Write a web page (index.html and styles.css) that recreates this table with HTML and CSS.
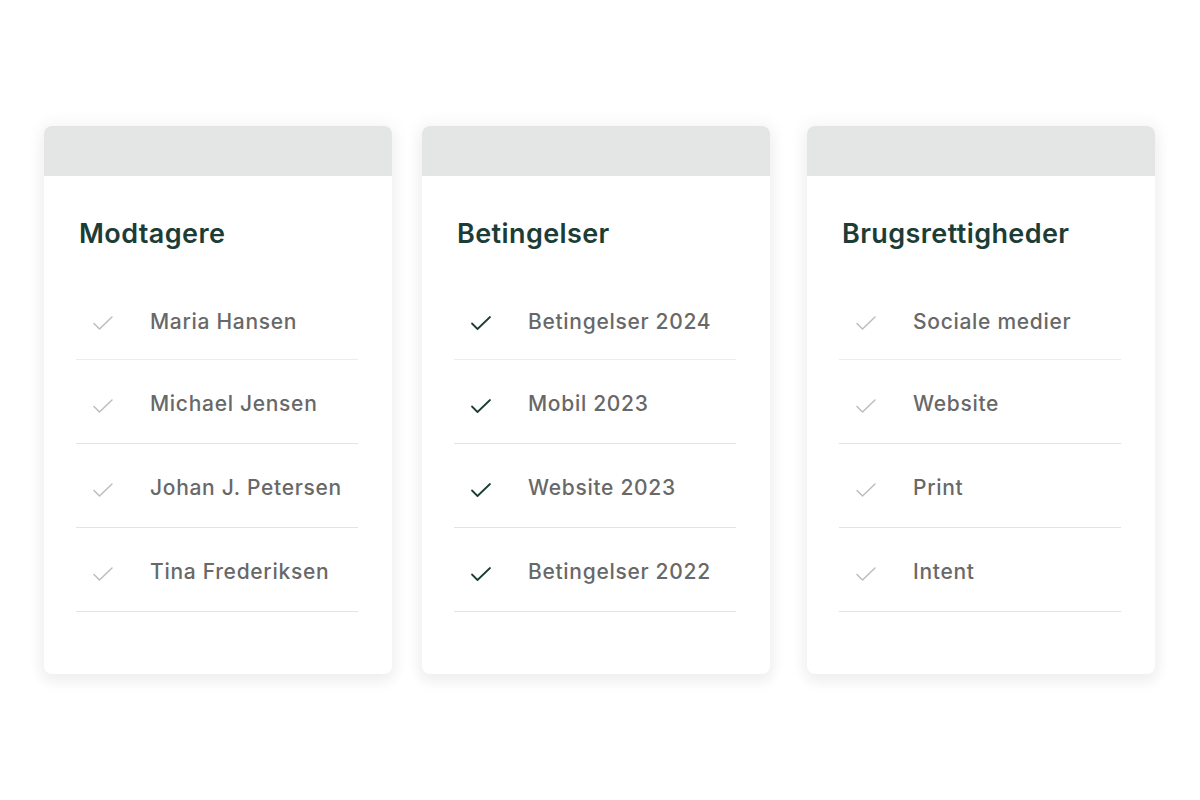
FILE: index.html
```html
<!DOCTYPE html>
<html lang="da">
<head>
<meta charset="utf-8">
<link rel="stylesheet" href="styles.css">
<title>Kort</title>
</head>
<body>
<div class="board">
  <section class="card">
    <div class="card-head"></div>
    <h2 class="card-title">Modtagere</h2>
    <ul class="list">
      <li class="row first"><svg class="check muted" viewBox="0 0 20 14"><path d="M1 7.5 L6.5 13 L19 1"/></svg><span>Maria Hansen</span></li>
      <li class="row"><svg class="check muted" viewBox="0 0 20 14"><path d="M1 7.5 L6.5 13 L19 1"/></svg><span>Michael Jensen</span></li>
      <li class="row"><svg class="check muted" viewBox="0 0 20 14"><path d="M1 7.5 L6.5 13 L19 1"/></svg><span>Johan J. Petersen</span></li>
      <li class="row"><svg class="check muted" viewBox="0 0 20 14"><path d="M1 7.5 L6.5 13 L19 1"/></svg><span>Tina Frederiksen</span></li>
    </ul>
  </section>
  <section class="card">
    <div class="card-head"></div>
    <h2 class="card-title">Betingelser</h2>
    <ul class="list">
      <li class="row first"><svg class="check on" viewBox="0 0 20 14"><path d="M1 7.5 L6.5 13 L19 1"/></svg><span>Betingelser 2024</span></li>
      <li class="row"><svg class="check on" viewBox="0 0 20 14"><path d="M1 7.5 L6.5 13 L19 1"/></svg><span>Mobil 2023</span></li>
      <li class="row"><svg class="check on" viewBox="0 0 20 14"><path d="M1 7.5 L6.5 13 L19 1"/></svg><span>Website 2023</span></li>
      <li class="row"><svg class="check on" viewBox="0 0 20 14"><path d="M1 7.5 L6.5 13 L19 1"/></svg><span>Betingelser 2022</span></li>
    </ul>
  </section>
  <section class="card card-wide-gap">
    <div class="card-head"></div>
    <h2 class="card-title">Brugsrettigheder</h2>
    <ul class="list">
      <li class="row first"><svg class="check muted" viewBox="0 0 20 14"><path d="M1 7.5 L6.5 13 L19 1"/></svg><span>Sociale medier</span></li>
      <li class="row"><svg class="check muted" viewBox="0 0 20 14"><path d="M1 7.5 L6.5 13 L19 1"/></svg><span>Website</span></li>
      <li class="row"><svg class="check muted" viewBox="0 0 20 14"><path d="M1 7.5 L6.5 13 L19 1"/></svg><span>Print</span></li>
      <li class="row"><svg class="check muted" viewBox="0 0 20 14"><path d="M1 7.5 L6.5 13 L19 1"/></svg><span>Intent</span></li>
    </ul>
  </section>
</div>
</body>
</html>
```

FILE: styles.css
```css
* { box-sizing: border-box; }

html, body {
  margin: 0;
  padding: 0;
  background: #ffffff;
  font-family: Inter, "Open Sans", "Liberation Sans", sans-serif;
}

body { min-height: 800px; }

.board {
  display: flex;
  gap: 30px;
  padding: 126px 0 60px 44px;
}

.card {
  width: 348px;
  height: 548px;
  background: #ffffff;
  border-radius: 8px;
  overflow: hidden;
  box-shadow: 0 0 14px 6px rgba(0, 0, 0, 0.03), 0 8px 14px 2px rgba(0, 0, 0, 0.04);
  display: flex;
  flex-direction: column;
}

.card-wide-gap { margin-left: 7px; }

.card-head {
  height: 50px;
  background: #e4e6e5;
  flex: none;
}

.card-title {
  margin: 42px 0 0 35px;
  font-size: 27px;
  line-height: 32px;
  font-weight: 600;
  color: #1c3d36;
  letter-spacing: 0.4px;
}

.list {
  list-style: none;
  margin: 27px 34px 0 32px;
  padding: 0;
}

.row {
  height: 84px;
  border-bottom: 1px solid #e3e3e3;
  display: flex;
  align-items: center;
  padding-top: 4px;
  font-size: 21px;
  font-weight: 500;
  color: #686868;
  letter-spacing: 0.7px;
}

.row.first {
  height: 83px;
  padding-top: 6px;
  border-bottom-color: #ececec;
}

.check {
  width: 20px;
  height: 14px;
  margin: 4px 37px 0 17px;
  fill: none;
  stroke-linecap: round;
  stroke-linejoin: round;
  flex: none;
  overflow: visible;
}

.check.muted {
  stroke: #bdbdbd;
  stroke-width: 1.5;
}

.check.on {
  stroke: #1c3d36;
  stroke-width: 1.8;
}
```
